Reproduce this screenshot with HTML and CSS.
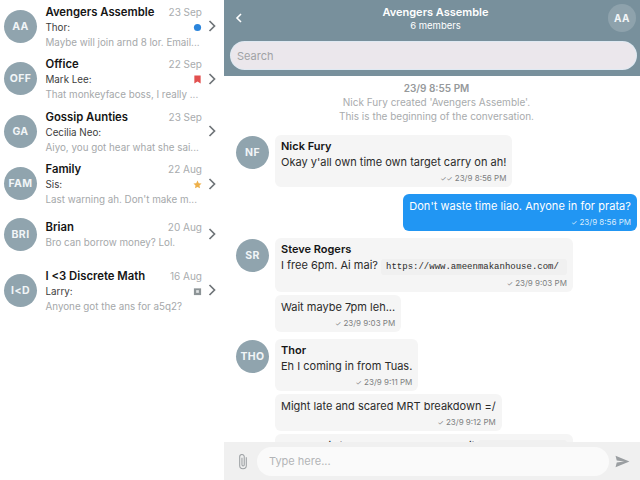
FILE: index.html
```html
<!DOCTYPE html>
<html lang="en">
<head>
<meta charset="utf-8">
<title>Avengers Assemble</title>
<link rel="stylesheet" href="styles.css">
</head>
<body>
<div class="app">
  <aside class="sidebar">
    <div class="row">
      <div class="avatar">AA</div>
      <div class="row-main">
        <div class="row-top"><span class="row-name">Avengers Assemble</span><span class="row-date">23 Sep</span></div>
        <div class="row-mid"><span class="row-from">Thor:</span><svg class="mark" viewBox="0 0 10 10"><circle cx="5" cy="5" r="4" fill="#2b85dc"/></svg></div>
        <div class="row-text">Maybe will join arnd 8 lor. Email...</div>
      </div>
      <svg class="chev" viewBox="0 0 10 14"><path d="M2.5 2l5 5-5 5" fill="none" stroke="#6f7478" stroke-width="1.7"/></svg>
    </div>
    <div class="row">
      <div class="avatar">OFF</div>
      <div class="row-main">
        <div class="row-top"><span class="row-name">Office</span><span class="row-date">22 Sep</span></div>
        <div class="row-mid"><span class="row-from">Mark Lee:</span><svg class="mark" viewBox="0 0 10 10"><path d="M1.5 0.5h7v9L5 7.3 1.5 9.5z" fill="#e2504f"/></svg></div>
        <div class="row-text">That monkeyface boss, I really ...</div>
      </div>
      <svg class="chev" viewBox="0 0 10 14"><path d="M2.5 2l5 5-5 5" fill="none" stroke="#6f7478" stroke-width="1.7"/></svg>
    </div>
    <div class="row">
      <div class="avatar">GA</div>
      <div class="row-main">
        <div class="row-top"><span class="row-name">Gossip Aunties</span><span class="row-date">23 Sep</span></div>
        <div class="row-mid"><span class="row-from">Cecilia Neo:</span></div>
        <div class="row-text">Aiyo, you got hear what she sai...</div>
      </div>
      <svg class="chev" viewBox="0 0 10 14"><path d="M2.5 2l5 5-5 5" fill="none" stroke="#6f7478" stroke-width="1.7"/></svg>
    </div>
    <div class="row">
      <div class="avatar">FAM</div>
      <div class="row-main">
        <div class="row-top"><span class="row-name">Family</span><span class="row-date">22 Aug</span></div>
        <div class="row-mid"><span class="row-from">Sis:</span><svg class="mark" viewBox="0 0 10 10"><path d="M5 .6l1.4 2.9 3.1.4-2.3 2.2.6 3.2L5 7.8 2.2 9.3l.6-3.2L.5 3.9l3.1-.4z" fill="#eeb04a"/></svg></div>
        <div class="row-text">Last warning ah. Don't make m...</div>
      </div>
      <svg class="chev" viewBox="0 0 10 14"><path d="M2.5 2l5 5-5 5" fill="none" stroke="#6f7478" stroke-width="1.7"/></svg>
    </div>
    <div class="row row-short">
      <div class="avatar">BRI</div>
      <div class="row-main">
        <div class="row-top"><span class="row-name">Brian</span><span class="row-date">20 Aug</span></div>
        <div class="row-text">Bro can borrow money? Lol.</div>
      </div>
      <svg class="chev" viewBox="0 0 10 14"><path d="M2.5 2l5 5-5 5" fill="none" stroke="#6f7478" stroke-width="1.7"/></svg>
    </div>
    <div class="row">
      <div class="avatar">I&lt;D</div>
      <div class="row-main">
        <div class="row-top"><span class="row-name">I &lt;3 Discrete Math</span><span class="row-date">16 Aug</span></div>
        <div class="row-mid"><span class="row-from">Larry:</span><svg class="mark" viewBox="0 0 10 10"><path d="M1 1.5h8v7.500H1z" fill="#8d9497"/><rect x="3.500" y="3.500" width="3" height="3" fill="#dfe2e3"/></svg></div>
        <div class="row-text">Anyone got the ans for a5q2?</div>
      </div>
      <svg class="chev" viewBox="0 0 10 14"><path d="M2.5 2l5 5-5 5" fill="none" stroke="#6f7478" stroke-width="1.7"/></svg>
    </div>
  </aside>

  <main class="chat">
    <header class="chat-header">
      <div class="title-bar">
        <svg class="back" viewBox="0 0 8 12"><path d="M6 2L2 6l4 4" fill="none" stroke="#fff" stroke-width="1.6"/></svg>
        <div class="title-text">
          <div class="title">Avengers Assemble</div>
          <div class="subtitle">6 members</div>
        </div>
        <div class="avatar avatar-head">AA</div>
      </div>
      <div class="search">Search</div>
    </header>

    <section class="messages">
      <div class="system">
        <div class="system-time">23/9 8:55 PM</div>
        <div>Nick Fury created 'Avengers Assemble'.</div>
        <div>This is the beginning of the conversation.</div>
      </div>

      <div class="group">
        <div class="avatar">NF</div>
        <div class="bubbles">
          <div class="bubble">
            <div class="sender">Nick Fury</div>
            <div class="text">Okay y'all own time own target carry on ah!</div>
            <div class="meta"><span class="tick">✓✓</span> 23/9 8:56 PM</div>
          </div>
        </div>
      </div>

      <div class="bubble bubble-own">
        <div class="text">Don't waste time liao. Anyone in for prata?</div>
        <div class="meta"><span class="tick">✓</span> 23/9 8:56 PM</div>
      </div>

      <div class="group">
        <div class="avatar">SR</div>
        <div class="bubbles">
          <div class="bubble">
            <div class="sender">Steve Rogers</div>
            <div class="text">I free 6pm. Ai mai? <code class="link">https://www.ameenmakanhouse.com/</code></div>
            <div class="meta"><span class="tick">✓</span> 23/9 9:03 PM</div>
          </div>
          <div class="bubble">
            <div class="text">Wait maybe 7pm leh...</div>
            <div class="meta"><span class="tick">✓</span> 23/9 9:03 PM</div>
          </div>
        </div>
      </div>

      <div class="group">
        <div class="avatar">THO</div>
        <div class="bubbles">
          <div class="bubble">
            <div class="sender">Thor</div>
            <div class="text">Eh I coming in from Tuas.</div>
            <div class="meta"><span class="tick">✓</span> 23/9 9:11 PM</div>
          </div>
          <div class="bubble">
            <div class="text">Might late and scared MRT breakdown =/</div>
            <div class="meta"><span class="tick">✓</span> 23/9 9:12 PM</div>
          </div>
          <div class="bubble">
            <div class="text">Maybe will take and Grab. Really a bit <code class="link">https://go.sg/</code></div>
          </div>
        </div>
      </div>
    </section>

    <footer class="composer">
      <svg class="clip" viewBox="0 0 12 18"><path d="M9.500 4.500v8.700a3.500 3.500 0 0 1-7 0V4a2.400 2.400 0 0 1 4.800 0v8.500a1.200 1.200 0 0 1-2.400 0V5" fill="none" stroke="#9b9fa2" stroke-width="1.100"/></svg>
      <div class="input">Type here...</div>
      <svg class="send" viewBox="0 0 16 14"><path d="M.5.8L15.500 7 .5 13.200 1.800 8l8-1-8-1z" fill="#9a9ea1"/></svg>
    </footer>
  </main>
</div>
</body>
</html>
```

FILE: styles.css
```css
* { box-sizing: border-box; }

html, body {
  margin: 0;
  height: 100%;
  overflow: hidden;
}

body {
  font-family: "Inter", "Liberation Sans", sans-serif;
  color: #2b2b2b;
  background: #fff;
}

.app {
  display: grid;
  grid-template-columns: 224px 416px;
  height: 480px;
}

.avatar {
  flex: none;
  display: flex;
  align-items: center;
  justify-content: center;
  width: 33px;
  height: 33px;
  border-radius: 50%;
  background: #90a4ae;
  color: #f1f5f7;
  font-size: 10.500px;
  font-weight: 700;
  letter-spacing: .4px;
}

/* Conversation list */
.sidebar {
  display: flex;
  flex-direction: column;
  padding-right: 1px;
  background: #fff;
}

.row {
  display: flex;
  align-items: center;
  height: 52.500px;
  padding-left: 4px;
}

.row-short {
  height: 48px;
  margin-bottom: 6px;
}

.row-main {
  flex: 1;
  min-width: 0;
  margin: 0 3px 0 8.500px;
  padding-top: 2px;
  font-size: 9.800px;
  line-height: 15px;
}

.row-top,
.row-mid {
  display: flex;
  justify-content: space-between;
  align-items: center;
}

.row-name {
  font-size: 11.300px;
  font-weight: 600;
  color: #151515;
}

.row-date {
  font-size: 10px;
  color: #a9acae;
}

.row-from {
  color: #3c3c3c;
}

.row-text {
  color: #a5a8aa;
  white-space: nowrap;
}

.mark {
  width: 9px;
  height: 9px;
}

.chev {
  flex: none;
  width: 10px;
  height: 14px;
  margin: 0 6px 0 2px;
}

/* Chat column */
.chat {
  display: flex;
  flex-direction: column;
  height: 480px;
  min-width: 0;
  overflow: hidden;
}

.chat-header {
  flex: none;
  height: 76px;
  padding: 0 4px;
  background: #78909c;
}

.title-bar {
  display: grid;
  grid-template-columns: 1fr auto 1fr;
  align-items: center;
  height: 42px;
  padding: 0 0 6px 7px;
}

.back {
  width: 8px;
  height: 12px;
}

.title-text {
  margin-top: 2px;
  text-align: center;
  color: #fff;
  line-height: 13px;
}

.title {
  font-size: 11px;
  font-weight: 600;
}

.subtitle {
  font-size: 9.500px;
}

.avatar-head {
  justify-self: end;
  width: 28px;
  height: 28px;
  background: #8ea2ac;
  font-size: 10px;
}

.search {
  height: 27px;
  margin-left: 3px;
  padding: 0 6px;
  border-radius: 14px;
  background: #ebe7ec;
  box-shadow: 0 0 0 1px #dfe9f2;
  color: #a0a2a5;
  font-size: 11px;
  line-height: 29px;
}

.messages {
  flex: 1;
  min-height: 0;
  overflow: hidden;
  display: flex;
  flex-direction: column;
  gap: 7px;
  padding: 5px 3px 0 12px;
}

.system {
  flex: none;
  margin-bottom: 5px;
  text-align: center;
  font-size: 10px;
  line-height: 14px;
  color: #a8abad;
}

.system-time {
  font-weight: 600;
  color: #96999b;
}

.group {
  flex: none;
  display: flex;
  gap: 6px;
}

.group > .avatar {
  margin-top: 1px;
}

.bubbles {
  display: flex;
  flex-direction: column;
  align-items: flex-start;
  gap: 3px;
}

.bubble {
  flex: none;
  padding: 4px 6px 3px;
  border-radius: 6px;
  background: #f5f5f5;
}

.bubble-own {
  align-self: flex-end;
  background: #2196f3;
  color: #fff;
}

.bubble-own .text {
  letter-spacing: .05px;
}

.sender {
  font-size: 11px;
  font-weight: 600;
  line-height: 15px;
  color: #151515;
}

.text {
  font-size: 11px;
  line-height: 16px;
  white-space: nowrap;
}

.link {
  display: inline-block;
  padding: 0 8px 0 5px;
  border-radius: 3px;
  background: #f0f0f0;
  font-family: "Liberation Mono", monospace;
  font-size: 9px;
  line-height: 16px;
}

.meta {
  margin-top: 3px;
  text-align: right;
  font-size: 8px;
  line-height: 11px;
  color: #7d7f81;
}

.bubble-own .meta {
  color: #d8ecfc;
}

.tick {
  font-size: 7px;
}

.composer {
  flex: none;
  display: flex;
  align-items: center;
  height: 38px;
  padding: 0 10px 0 13px;
  background: #f0f0f0;
}

.clip {
  flex: none;
  width: 12px;
  height: 17px;
}

.input {
  flex: 1;
  height: 29px;
  margin: 1px 6px 0 8px;
  padding: 0 12px;
  border-radius: 15px;
  background: #fafafa;
  color: #b3b5b7;
  font-size: 11px;
  line-height: 29px;
}

.send {
  flex: none;
  width: 15px;
  height: 13px;
}
```
